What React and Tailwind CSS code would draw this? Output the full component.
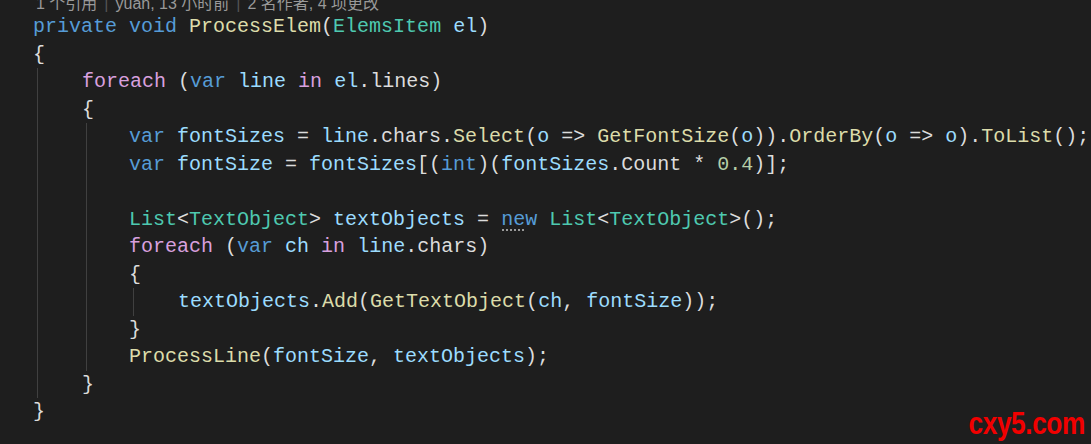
const K = ({ children }) => <span className="text-[#569cd6]">{children}</span>;
const C = ({ children }) => <span className="text-[#d8a0df]">{children}</span>;
const M = ({ children }) => <span className="text-[#dcdcaa]">{children}</span>;
const T = ({ children }) => <span className="text-[#4ec9b0]">{children}</span>;
const V = ({ children }) => <span className="text-[#9cdcfe]">{children}</span>;
const N = ({ children }) => <span className="text-[#b5cea8]">{children}</span>;

const Line = ({ children }) => (
  <div className="h-[27.5px] leading-[27.5px] whitespace-pre">{children}</div>
);

// indent block with a guide on its left edge
const Block = ({ children }) => (
  <div className="ml-[4px] border-l border-[#404040] pl-[44px]">{children}</div>
);

const Sep = () => <span className="mx-[7px] text-[#555555]">|</span>;

const App = () => {
  return (
    <div className="relative w-[1091px] h-[444px] overflow-hidden bg-[#1e1e1e] text-[#dcdcdc] font-['Liberation_Mono','DejaVu_Sans_Mono',monospace] text-[20px]">
      {/* code lens */}
      <div className="h-[13px] pl-[36px]">
        <div className="-translate-y-[5px] h-[18px] leading-[18px] text-[16px] text-[#999999] whitespace-pre font-['Liberation_Sans','Noto_Sans_CJK_SC',sans-serif]">
          1 个引用<Sep />yuan, 13 小时前<Sep />2 名作者, 4 项更改
        </div>
      </div>

      <div className="pl-[33px]">
        <Line>
          <K>private</K> <K>void</K> <M>ProcessElem</M>(<T>ElemsItem</T> <V>el</V>)
        </Line>
        <Line>{"{"}</Line>
        <Block>
          <Line>
            <C>foreach</C> (<K>var</K> <V>line</V> <C>in</C> <V>el</V>.lines)
          </Line>
          <Line>{"{"}</Line>
          <div className="ml-[4px] border-l border-[#404040] pl-[42px]">
            <Line>
              <K>var</K> <V>fontSizes</V> = <V>line</V>.chars.<M>Select</M>(<V>o</V> =&gt; <M>GetFontSize</M>(<V>o</V>)).<M>OrderBy</M>(<V>o</V> =&gt; <V>o</V>).<M>ToList</M>();
            </Line>
            <Line>
              <K>var</K> <V>fontSize</V> = <V>fontSizes</V>[(<K>int</K>)(<V>fontSizes</V>.Count * <N>0.4</N>)];
            </Line>
            <Line> </Line>
            <Line>
              <T>List</T>&lt;<T>TextObject</T>&gt; <V>textObjects</V> ={" "}
              <span className="relative">
                <K>new</K>
                <span className="absolute left-[1px] bottom-[0px] w-[22px] border-b-2 border-dotted border-[#9a9a9a]" />
              </span>{" "}
              <T>List</T>&lt;<T>TextObject</T>&gt;();
            </Line>
            <Line>
              <C>foreach</C> (<K>var</K> <V>ch</V> <C>in</C> <V>line</V>.chars)
            </Line>
            <Line>{"{"}</Line>
            <Block>
              <Line>
                <V>textObjects</V>.<M>Add</M>(<M>GetTextObject</M>(<V>ch</V>, <V>fontSize</V>));
              </Line>
            </Block>
            <Line>{"}"}</Line>
            <Line>
              <M>ProcessLine</M>(<V>fontSize</V>, <V>textObjects</V>);
            </Line>
          </div>
          <Line>{"}"}</Line>
        </Block>
        <Line>{"}"}</Line>
      </div>

      {/* watermark */}
      <div className="absolute right-[6px] bottom-[5px] origin-right scale-x-[0.82] text-[32px] leading-[32px] font-bold text-[#f20000] font-['Liberation_Sans_Narrow','Liberation_Sans',sans-serif] tracking-[-0.5px]">
        cxy5.com
      </div>
    </div>
  );
};

export default App;
